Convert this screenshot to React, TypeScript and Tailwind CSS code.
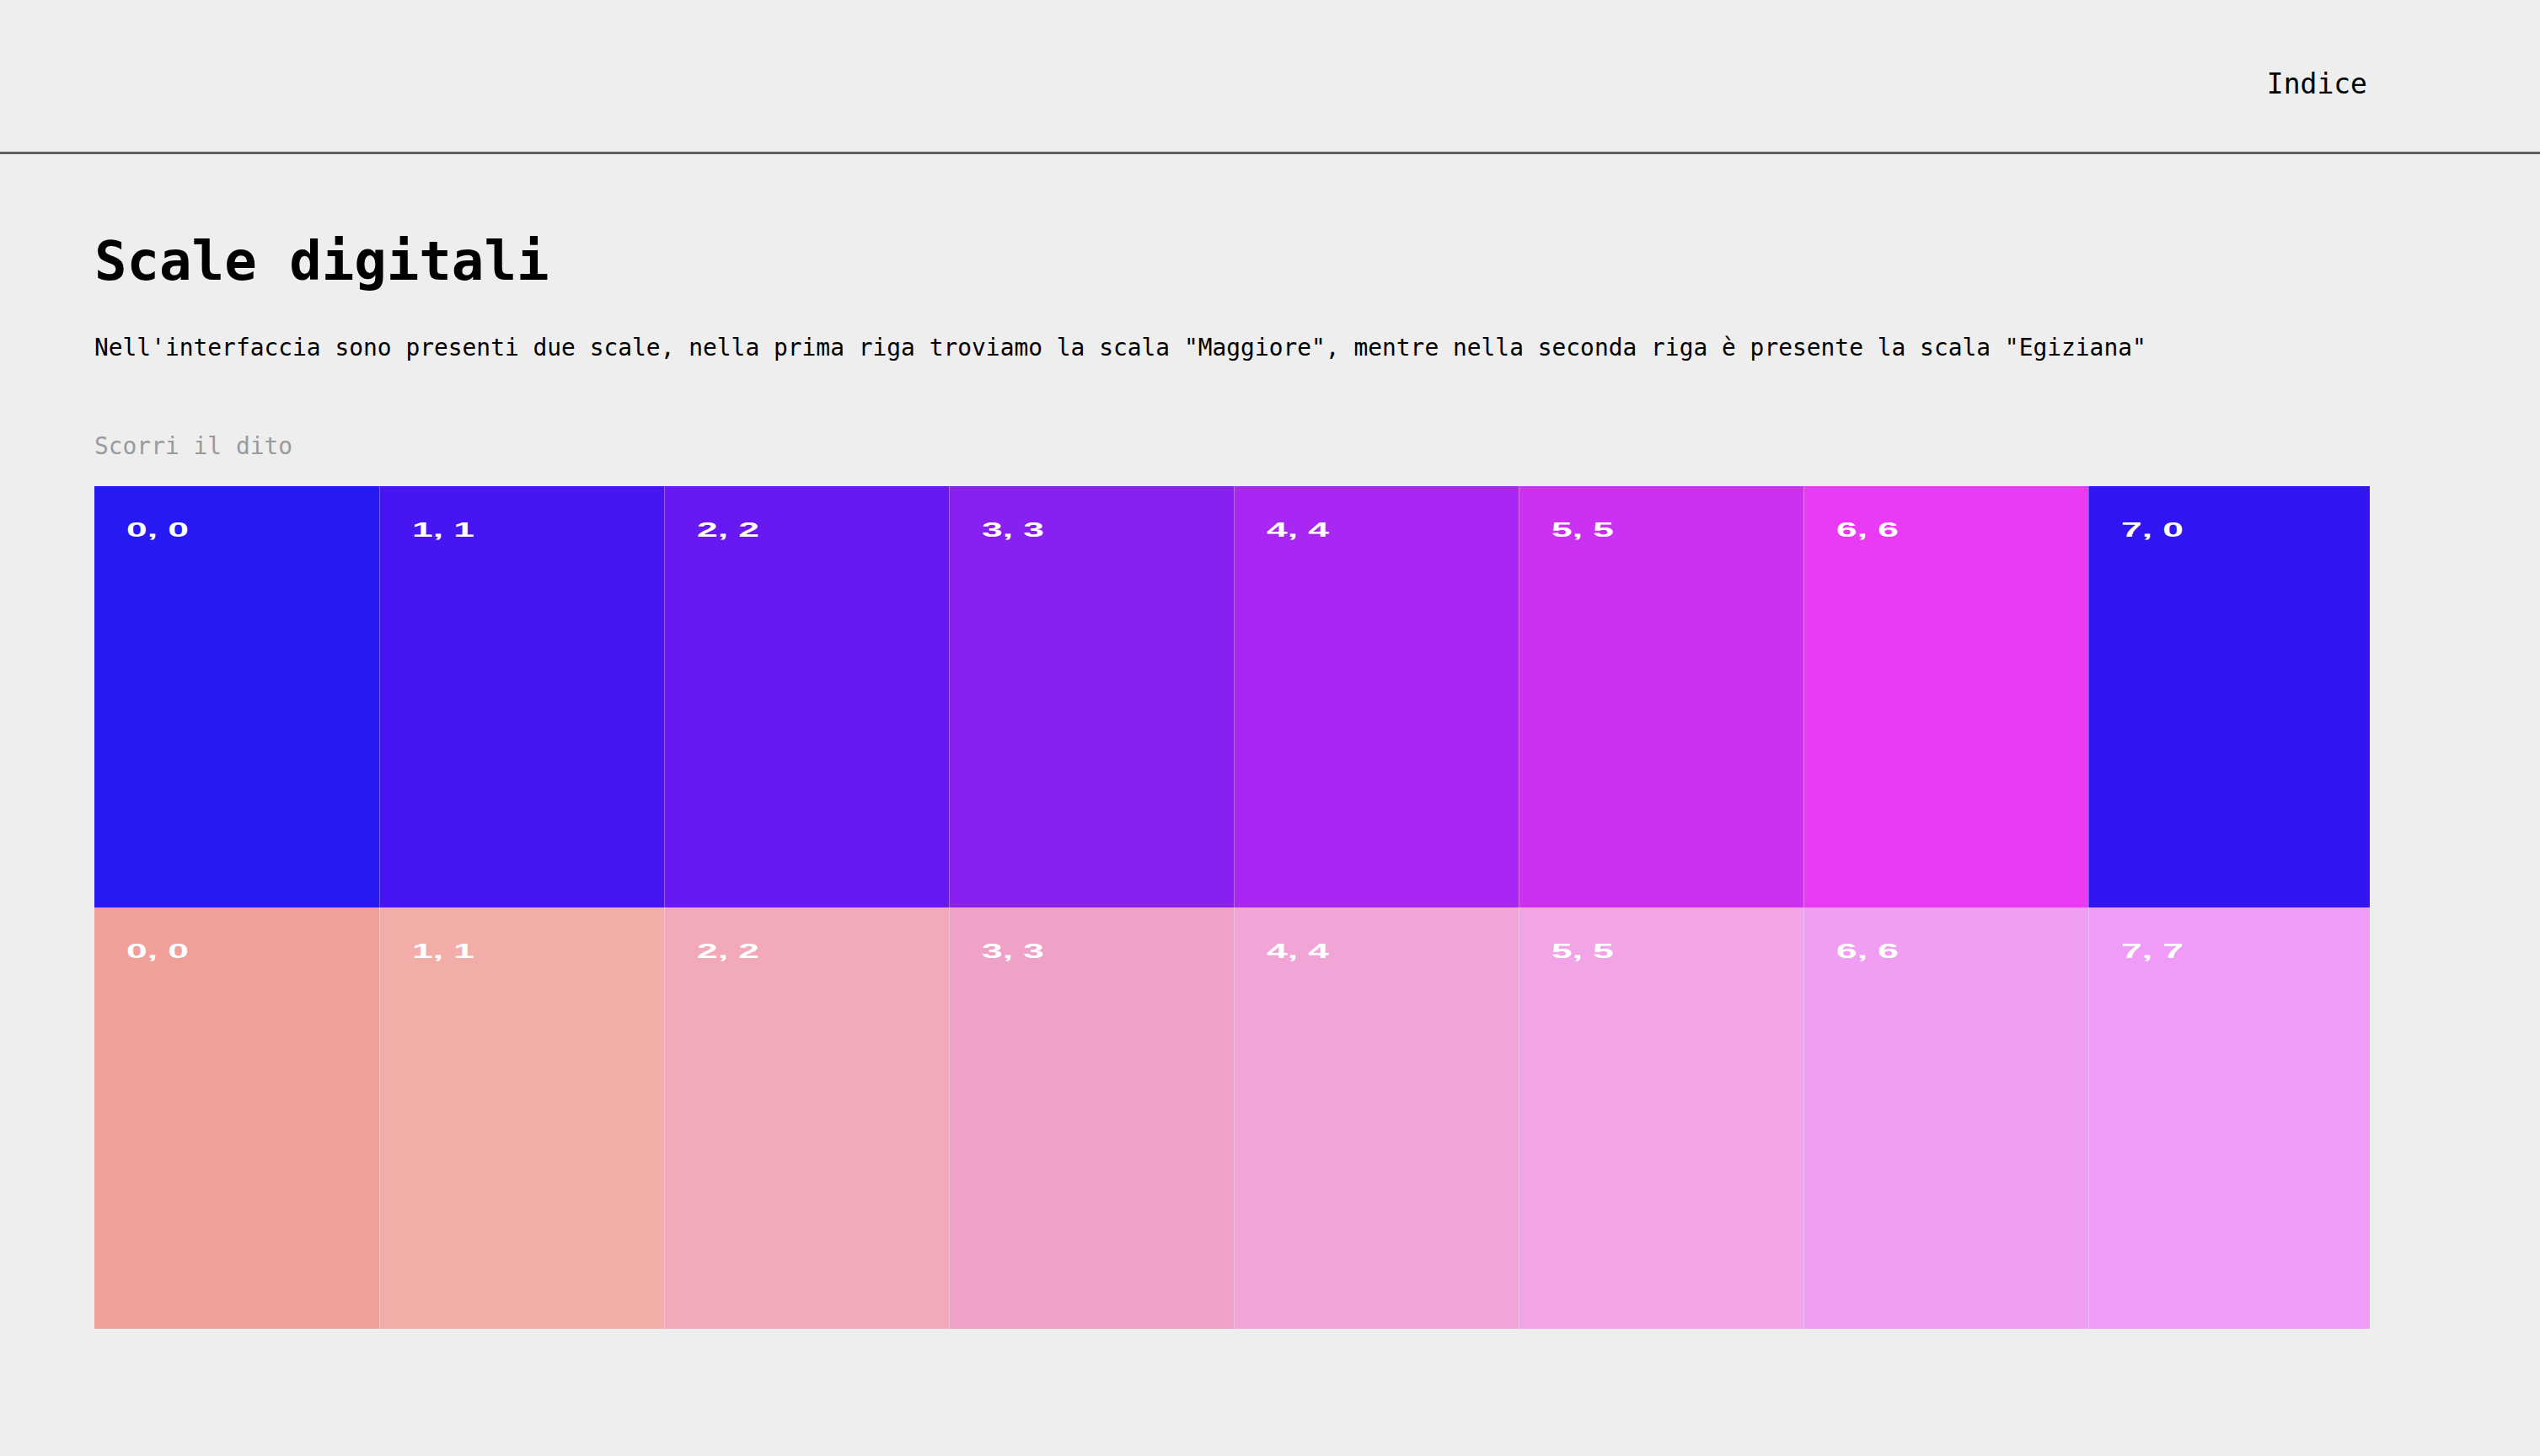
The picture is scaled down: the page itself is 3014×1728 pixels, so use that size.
const majorScale = [
  { label: "0, 0", color: "bg-[#2619f3]" },
  { label: "1, 1", color: "bg-[#4714f2]" },
  { label: "2, 2", color: "bg-[#6819f2]" },
  { label: "3, 3", color: "bg-[#8920f2]" },
  { label: "4, 4", color: "bg-[#a927f2]" },
  { label: "5, 5", color: "bg-[#cb31f3]" },
  { label: "6, 6", color: "bg-[#ea3af4]" },
  { label: "7, 0", color: "bg-[#3115f2]" },
];

const egyptianScale = [
  { label: "0, 0", color: "bg-[#f0a099]" },
  { label: "1, 1", color: "bg-[#f3ada9]" },
  { label: "2, 2", color: "bg-[#f2aab8]" },
  { label: "3, 3", color: "bg-[#f0a1c7]" },
  { label: "4, 4", color: "bg-[#f1a4d6]" },
  { label: "5, 5", color: "bg-[#f1a5e6]" },
  { label: "6, 6", color: "bg-[#f09ef2]" },
  { label: "7, 7", color: "bg-[#f09bf8]" },
];

type Step = { label: string; color: string };

function ScaleRow({ steps }: { steps: Step[] }) {
  return (
    <div className="flex h-[500px]">
      {steps.map((step, index) => (
        <div
          key={index}
          className={`w-[338px] shrink-0 pl-[38px] pt-[40px] ${step.color} ${
            index > 0 ? "border-l border-white/30" : ""
          }`}
        >
          <span className="inline-block origin-left scale-x-[1.85] font-['Liberation_Sans',Arial,sans-serif] text-[24px] leading-none font-bold text-white">
            {step.label}
          </span>
        </div>
      ))}
    </div>
  );
}

export default function App() {
  return (
    <div className="min-h-screen w-full bg-[#eeeeee] font-['DejaVu_Sans_Mono',monospace] text-black">
      <header className="flex h-[183px] justify-end border-b-[3px] border-[#5f5f5f] pr-[205px] pl-[112px] pt-[80px]">
        <a className="text-[33px] leading-[40px]">Indice</a>
      </header>

      <main className="pl-[112px] pr-[202px]">
        <h1 className="mt-[95px] text-[64px] leading-none font-bold">Scale digitali</h1>
        <p className="mt-[50px] text-[27.9px] leading-[42px]">
          Nell'interfaccia sono presenti due scale, nella prima riga troviamo la scala "Maggiore", mentre nella seconda riga è presente la scala "Egiziana"
        </p>
        <p className="mt-[75px] text-[27.9px] leading-[42px] text-[#9a9a9a]">Scorri il dito</p>

        <div className="mt-[26px] overflow-hidden">
          <ScaleRow steps={majorScale} />
          <ScaleRow steps={egyptianScale} />
        </div>
      </main>
    </div>
  );
}
